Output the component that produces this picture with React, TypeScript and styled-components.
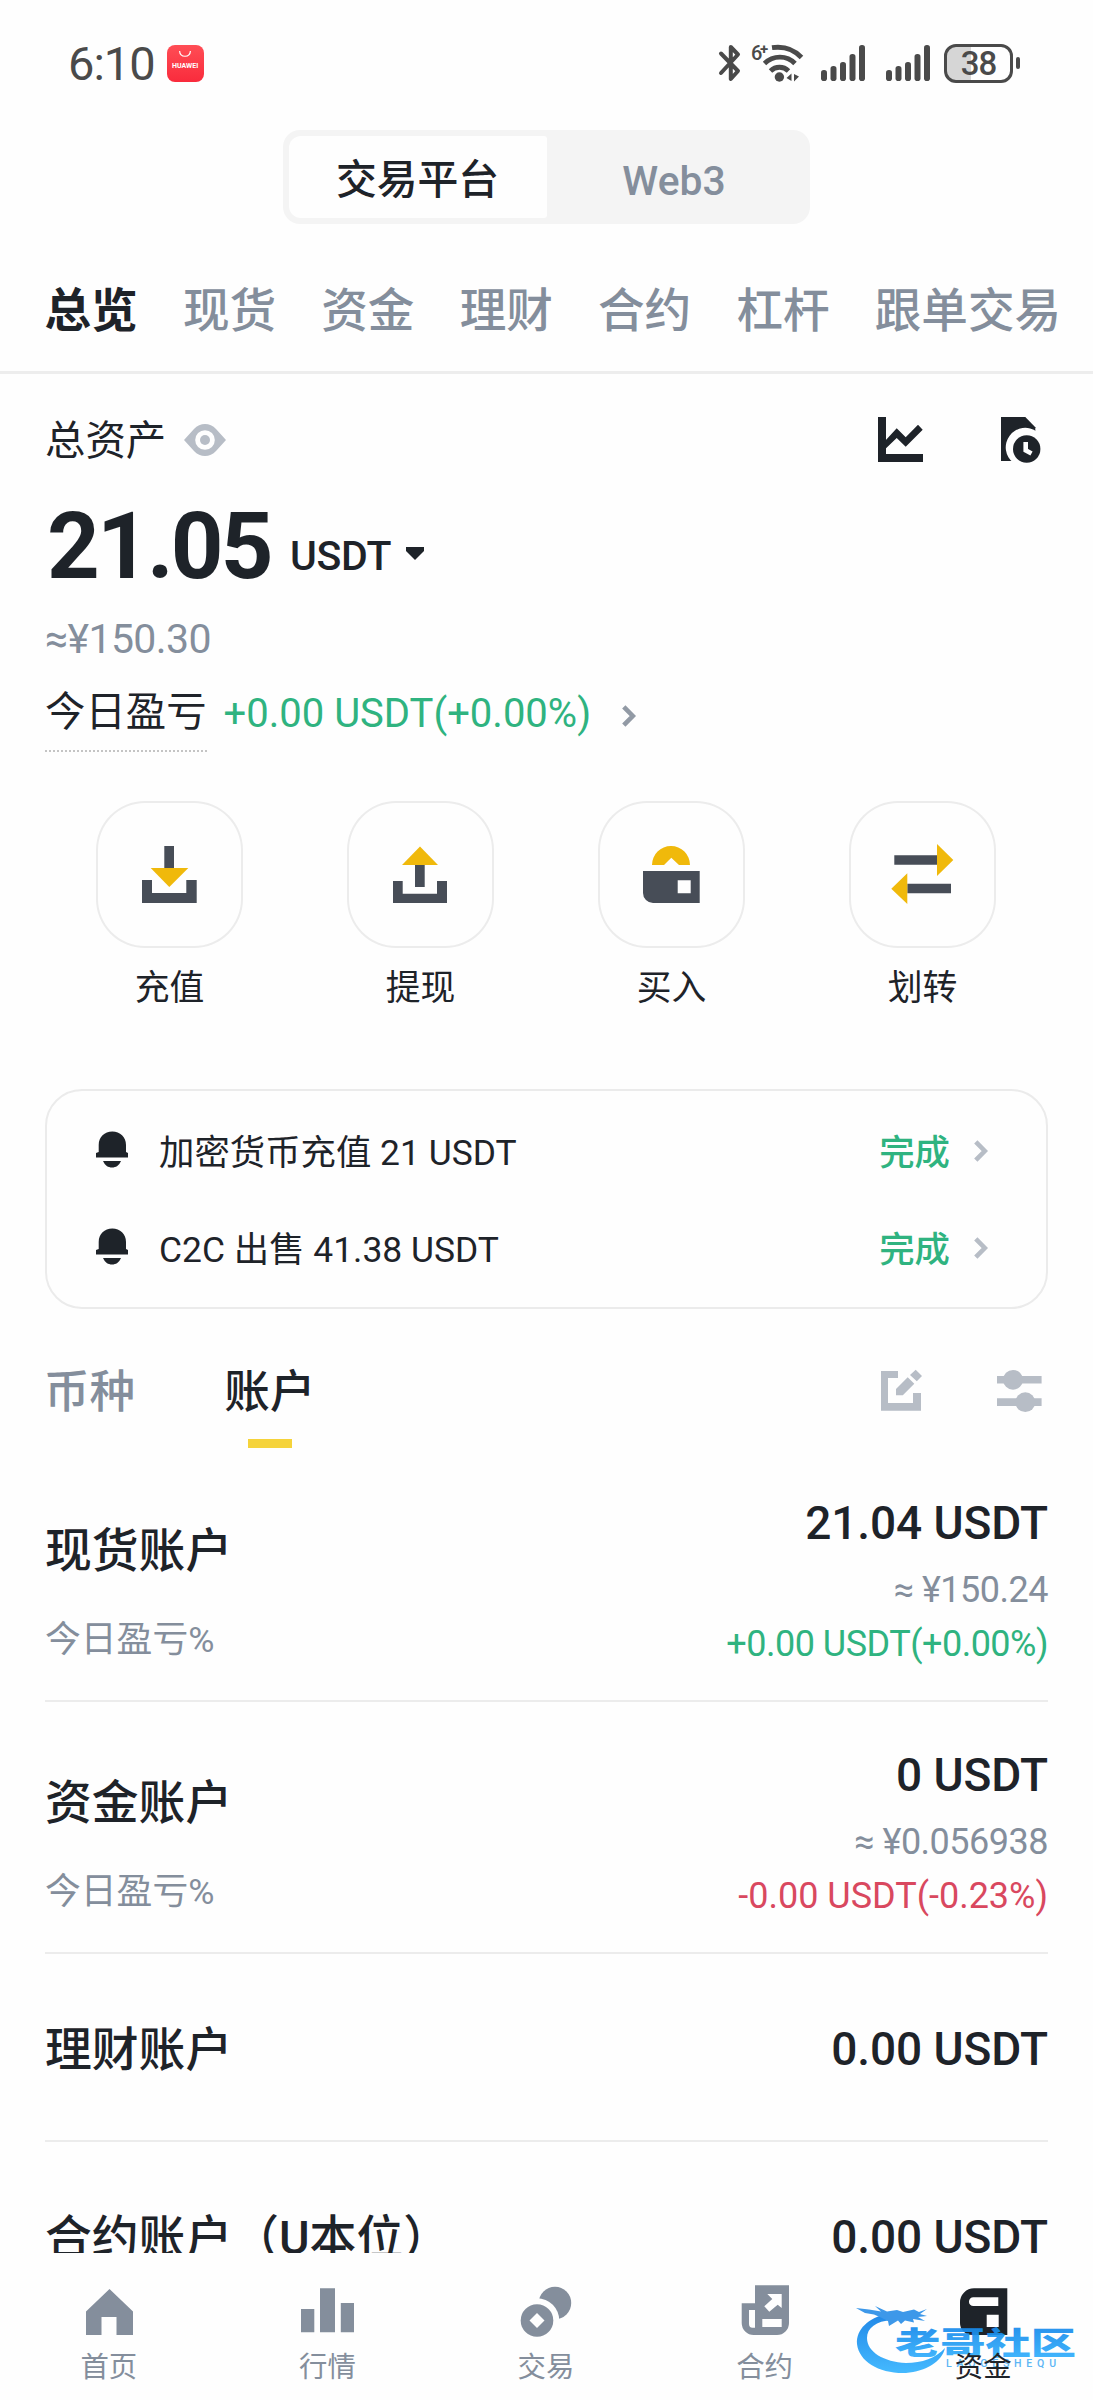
import React from "react";
import styled, { createGlobalStyle } from "styled-components";

const INK = "#1e2329";
const MUTED = "#848e9c";
const FAINT = "#b7bdc6";
const GREEN = "#2fb380";
const RED = "#d9485f";
const LINE = "#ececec";
const SLATE = "#474d57";
const GOLD = "#f0b90b";
const STATUS = "#4a4a4a";

const GlobalStyle = createGlobalStyle`
  * { box-sizing: border-box; }
  body {
    margin: 0;
    background: #fefefe;
    color: ${INK};
    font-family: Roboto, "Noto Sans CJK SC", sans-serif;
  }
  svg { display: block; flex: none; overflow: visible; }
`;

const Screen = styled.div`
  position: relative;
  display: flex;
  flex-direction: column;
  width: 1093px;
  height: 2400px;
  overflow: hidden;
`;

const Content = styled.main`
  flex: 1;
  min-height: 0;
  overflow: hidden;
`;

/* ---------- status bar ---------- */

const StatusBar = styled.header`
  display: flex;
  align-items: center;
  height: 130px;
  padding: 0 73px 4px 68px;
  color: ${STATUS};
`;

const Clock = styled.span`
  padding-top: 2px;
  font-size: 47px;
  line-height: 60px;
  letter-spacing: -1px;
`;

const StoreBadge = styled.div`
  display: flex;
  flex-direction: column;
  align-items: center;
  width: 37px;
  height: 37px;
  margin-left: 12px;
  padding-top: 6px;
  border-radius: 8px;
  background: linear-gradient(#ff4d55, #f92b3c);
  color: #fff;
  font-size: 7px;
  font-weight: 700;
  line-height: 8px;
`;

const BadgeName = styled.span`
  margin-top: 5px;
`;

const StatusIcons = styled.div`
  display: flex;
  align-items: center;
  margin-left: auto;
`;

const Spacer = styled.i<{ $w: number }>`
  width: ${(p) => p.$w}px;
`;

const Battery = styled.div`
  display: flex;
  align-items: center;
  justify-content: center;
  width: 69px;
  height: 39px;
  border: 3px solid ${STATUS};
  border-radius: 12px;
  background: linear-gradient(90deg, #d6d6d6 38%, transparent 38%);
  font-size: 33px;
  font-weight: 500;
  letter-spacing: -1px;
`;

const BatteryTip = styled.i`
  width: 4px;
  height: 12px;
  margin-left: 3px;
  border-radius: 2px;
  background: ${STATUS};
`;

/* ---------- platform switch and tabs ---------- */

const Switch = styled.div`
  display: flex;
  width: 527px;
  height: 94px;
  margin: 0 auto;
  padding: 6px;
  border-radius: 17px;
  background: #f4f4f4;
`;

const SwitchItem = styled.div<{ $active?: boolean }>`
  flex: ${(p) => (p.$active ? "0 0 258px" : "1")};
  padding-right: ${(p) => (p.$active ? 1 : 3)}px;
  border-radius: 12px 3px 3px 12px;
  background: ${(p) => (p.$active ? "#fefefe" : "transparent")};
  color: ${(p) => (p.$active ? INK : MUTED)};
  font-size: 40.8px;
  font-weight: 500;
  line-height: ${(p) => (p.$active ? 89 : 90)}px;
  height: 82px;
  text-align: center;
`;

const Tabs = styled.nav`
  display: flex;
  gap: 45.2px;
  height: 150px;
  padding: 57px 0 0 44.5px;
  border-bottom: 3px solid #ededed;
  font-size: 46.6px;
  line-height: 60px;
  white-space: nowrap;
`;

const Tab = styled.span<{ $active?: boolean }>`
  color: ${(p) => (p.$active ? INK : MUTED)};
  font-weight: ${(p) => (p.$active ? 700 : 500)};
`;

/* ---------- total assets ---------- */

const Section = styled.section`
  padding: 38px 45px 0;
`;

const TitleRow = styled.div`
  display: flex;
  align-items: center;
  height: 60px;
`;

const Title = styled.span`
  font-size: 40.4px;
  line-height: 60px;
`;

const TitleTools = styled.div`
  display: flex;
  gap: 78px;
  margin-left: auto;
  margin-right: 7px;
  padding-bottom: 5px;
`;

const TotalRow = styled.div`
  display: flex;
  align-items: flex-start;
  height: 100px;
  margin-top: 24px;
`;

const Total = styled.span`
  width: 245px;
  padding-left: 2px;
  font-size: 92px;
  font-weight: 700;
  line-height: 101px;
  letter-spacing: -2.8px;
`;

const Unit = styled.span`
  margin-right: 15px;
  font-size: 41px;
  font-weight: 500;
  line-height: 120px;
  letter-spacing: -0.3px;
`;

const Caret = styled.svg`
  margin-top: 51px;
`;

const Approx = styled.div`
  height: 50px;
  margin-top: 18px;
  color: ${MUTED};
  font-size: 41px;
  line-height: 50px;
  letter-spacing: -0.6px;
`;

const PnlRow = styled.div`
  display: flex;
  align-items: flex-start;
  height: 66px;
  margin-top: 22px;
  font-size: 40.4px;
  line-height: 54px;
`;

const PnlLabel = styled.span`
  height: 66px;
  border-bottom: 2px dotted #c4c4c4;
`;

const PnlValue = styled.span`
  margin: 0 31px 0 17px;
  padding-top: 1px;
  color: ${GREEN};
  font-size: 40px;
`;

const PnlArrow = styled.span`
  padding-top: 19px;
`;

/* ---------- actions ---------- */

const Actions = styled.div`
  display: flex;
  gap: 104px;
  margin-top: 49px;
  padding-left: 51px;
`;

const Action = styled.div`
  width: 147px;
  font-size: 34.8px;
  line-height: 50px;
  text-align: center;
`;

const ActionBox = styled.div`
  width: 147px;
  height: 147px;
  margin-bottom: 15px;
  border-radius: 49px;
  box-shadow: inset 0 0 0 2px ${LINE};
`;

/* ---------- notices ---------- */

const Card = styled.div`
  height: 220px;
  margin-top: 76px;
  padding: 11px 58px 0 49px;
  border: 2px solid #ebebeb;
  border-radius: 37px;
`;

const Notice = styled.div`
  display: flex;
  align-items: center;
  height: 97px;
  font-size: 35.4px;
  line-height: 50px;
`;

const NoticeText = styled.span`
  flex: 1;
  padding: 4px 0 0 31px;
`;

const NoticeState = styled.span`
  padding: 4px 24px 0 0;
  color: ${GREEN};
  font-weight: 500;
`;

/* ---------- accounts ---------- */

const ListTabs = styled.div`
  display: flex;
  gap: 89px;
  height: 86px;
  margin-top: 53px;
  margin-left: -1px;
`;

const ListTab = styled.div<{ $active?: boolean }>`
  display: flex;
  flex-direction: column;
  align-items: center;
  color: ${(p) => (p.$active ? INK : MUTED)};
  font-size: 45.6px;
  font-weight: 500;
  line-height: 61px;
  &::after {
    content: "";
    width: 44px;
    height: 9px;
    margin: 16px 0 0 1px;
    background: ${(p) => (p.$active ? "#f5d33b" : "transparent")};
  }
`;

const ListTools = styled.div`
  display: flex;
  gap: 75px;
  margin-left: auto;
  margin-right: 6px;
  padding-top: 8px;
`;

const Accounts = styled.div`
  padding-top: 2px;
`;

const AccountItem = styled.div<{ $brief?: boolean }>`
  display: flex;
  justify-content: space-between;
  align-items: ${(p) => (p.$brief ? "center" : "flex-start")};
  height: ${(p) => (p.$brief ? 188 : 252)}px;
  padding-top: ${(p) => (p.$brief ? 3 : 48)}px;
  border-bottom: 2px solid ${LINE};
`;

const AccountLeft = styled.div<{ $brief?: boolean }>`
  padding-top: ${(p) => (p.$brief ? 3 : 28)}px;
`;

const AccountName = styled.div`
  font-size: 46.8px;
  font-weight: 500;
  line-height: 50px;
`;

const AccountNote = styled.div`
  margin-top: 41px;
  color: ${MUTED};
  font-size: 35.8px;
  line-height: 46px;
`;

const AccountRight = styled.div`
  text-align: right;
`;

const Amount = styled.div`
  font-size: 46px;
  font-weight: 500;
  line-height: 50px;
  letter-spacing: -0.1px;
`;

const Sub = styled.div<{ $color: string; $gap: number }>`
  margin-top: ${(p) => p.$gap}px;
  color: ${(p) => p.$color};
  font-size: 36px;
  line-height: 46px;
  letter-spacing: ${(p) => (p.$color === RED ? 0 : -0.5)}px;
`;

/* ---------- bottom navigation ---------- */

const BottomNav = styled.nav`
  display: grid;
  grid-template-columns: repeat(5, 1fr);
  height: 147px;
  padding-top: 31px;
  background: #fefefe;
`;

const NavItem = styled.div`
  display: flex;
  flex-direction: column;
  align-items: center;
`;

const NavIcon = styled.div`
  display: flex;
  height: 54px;
`;

const NavLabel = styled.span<{ $active?: boolean }>`
  position: relative;
  z-index: 2;
  margin-top: 12px;
  margin-right: 1px;
  color: ${(p) => (p.$active ? INK : MUTED)};
  font-size: 28.4px;
  line-height: 36px;
`;

const Watermark = styled.svg`
  position: absolute;
  left: 852px;
  top: 2300px;
  z-index: 1;
  opacity: 0.92;
`;

/* ---------- icons ---------- */

const Bluetooth = () => (
  <svg width="24" height="40" fill="none" stroke={STATUS} strokeWidth="4" strokeLinecap="round" strokeLinejoin="round">
    <path d="M4 10.5L21 28L13.8 36V4L21 11.5L4 30" />
  </svg>
);

const WifiBox = styled.div`
  position: relative;
  width: 54px;
  height: 40px;
`;

const WifiGen = styled.span`
  position: absolute;
  left: 1px;
  top: 0;
  font-size: 20px;
  font-weight: 500;
  line-height: 20px;
  letter-spacing: -1px;
`;

const WifiPlus = styled.sup`
  position: absolute;
  left: 10px;
  top: -2px;
  font-size: 15px;
  font-weight: 700;
  line-height: 16px;
`;

const Wifi = () => (
  <WifiBox>
    <svg width="54" height="40" fill="none" stroke={STATUS} strokeWidth="4.8">
      <path d="M22 4.7C34 3 44 6.500 51.5 14.5" />
      <path d="M14.500 20.500C23 12 37 12 45 20.500" />
      <path d="M20.500 28C25.500 23 33.500 23 38.500 28" />
      <circle cx="29.400" cy="34" r="4.700" fill={STATUS} stroke="none" />
      <path d="M36.500 35L41.500 30.500V38ZM44 31V38.500L49 33.500Z" fill={STATUS} stroke="none" />
    </svg>
    <WifiGen>6</WifiGen>
    <WifiPlus>+</WifiPlus>
  </WifiBox>
);

const SIGNAL = [11, 15, 19, 27, 36];
const Signal = () => (
  <svg width="44" height="36" fill={STATUS}>
    {SIGNAL.map((h, i) => (
      <rect key={i} x={i * 9.5} y={36 - h} width="6" height={h} rx="2.800" />
    ))}
  </svg>
);

const EyeSvg = styled.svg`
  margin: 0 0 4px 17px;
`;

const Eye = () => (
  <EyeSvg width="44" height="34">
    <path d="M1 17L11 6C17 -.7 27 -.7 33 6L43 17L33 28C27 34.700 17 34.700 11 28Z" fill={FAINT} />
    <circle cx="22" cy="17" r="9.800" fill="#fefefe" />
    <circle cx="22" cy="17" r="5" fill={FAINT} />
  </EyeSvg>
);

const ChartIcon = () => (
  <svg width="45" height="45" fill={INK}>
    <path d="M0 0H8V37H45V45H0Z" />
    <path d="M7 24L18.700 11.300L27.700 20.300L40 7.700L44.700 12.700L27.700 29.700L18.700 21L7 32.300Z" />
  </svg>
);

const HistoryIcon = () => (
  <svg width="40" height="45">
    <path d="M0 0H24.300L34.300 10.300V44H0Z" fill={INK} />
    <path d="M36 14.800A18.300 18.300 0 0 0 12.500 46H36Z" fill="#fefefe" />
    <circle cx="25.700" cy="32" r="13.700" fill={INK} />
    <path d="M24.700 25V33.300L30.500 36.500" fill="none" stroke="#fefefe" strokeWidth="4.600" />
  </svg>
);

const Chevron = ({ color }: { color: string }) => (
  <svg width="14" height="22" fill="none" stroke={color} strokeWidth="4.600">
    <path d="M1.800 1.800L10.800 11L1.800 20.200" />
  </svg>
);

const BellSvg = styled.svg`
  margin-bottom: 2px;
`;

const Bell = () => (
  <BellSvg width="32" height="37" fill={INK}>
    <path d="M2.700 21V14C2.700 6 8.500 .5 16.300 .5S30 6 30 14V21L32 22V26.500H0V22Z" />
    <path d="M7 30H25C23 34.500 20 36.500 16 36.500S9 34.500 7 30Z" />
  </BellSvg>
);

const DepositIcon = () => (
  <svg width="147" height="147" fill={SLATE}>
    <path d="M68.300 45H78V67H68.300ZM46 79H56V92H90.300V79H100.700V102H46Z" />
    <path d="M54.700 67H92.300L73.300 86Z" fill={GOLD} />
  </svg>
);

const WithdrawIcon = () => (
  <svg width="147" height="147" fill={SLATE}>
    <path d="M68 63H77.700V86H68ZM46 80H55.700V92.700H90V80H100V102H46Z" />
    <path d="M55 64H91L73 45.500Z" fill={GOLD} />
  </svg>
);

const BuyIcon = () => (
  <svg width="147" height="147" fill={SLATE}>
    <path d="M54 64A19 19 0 0 1 92 64H81L73.300 56.700L66 64Z" fill={GOLD} />
    <path fillRule="evenodd" d="M45 70H101.700V102H55A10 10 0 0 1 45 92ZM79.700 79.300V92.300H92.700V79.300Z" />
  </svg>
);

const TransferIcon = () => (
  <svg width="147" height="147" fill={SLATE}>
    <path d="M45.300 54.300H88V63.700H45.300ZM58.300 82.700H102V92.300H58.300Z" />
    <path d="M88 43L104.300 59L88 75ZM58.300 72.300L42.300 87.700L58.300 103Z" fill={GOLD} />
  </svg>
);

const EditIcon = () => (
  <svg width="41" height="42" fill={FAINT}>
    <path d="M0 1H17V8H7V33H32V23H40V40.700H0Z" />
    <path d="M15 19L26.700 7.300L33.300 13.700L21.800 25.300H15ZM34.700 -.3L41 6L35.800 11.300L29 5Z" />
  </svg>
);

const SlidersIcon = () => (
  <svg width="45" height="44" fill={FAINT}>
    <path d="M0 6H44.600V13.500H0ZM0 28.300H44.600V36H0Z" />
    <circle cx="16" cy="9.800" r="9.900" />
    <circle cx="28.300" cy="32.200" r="9.900" />
  </svg>
);

const HomeIcon = () => (
  <svg width="47" height="50" fill={MUTED}>
    <path d="M23.500 5L47 27.500V51H30.500V33H15.500V51H0V27.500Z" />
  </svg>
);

const MarketIcon = () => (
  <svg width="53" height="50" fill={MUTED}>
    <path d="M0 25H13.300V48.300H0ZM19 4.300H34V48.300H19ZM39.800 19H53V48.300H39.800Z" />
  </svg>
);

const TradeIcon = () => (
  <svg width="52" height="52">
    <circle cx="35" cy="19" r="16.200" fill={MUTED} />
    <circle cx="17" cy="36.500" r="22.300" fill="#fefefe" />
    <circle cx="17" cy="36.500" r="16.300" fill={MUTED} />
    <path d="M17 29L24.500 36.500L17 44L9.500 36.500Z" fill="#fefefe" />
  </svg>
);

const FuturesIcon = () => (
  <svg width="49" height="52">
    <path
      d="M14 1.300H48V39A12 12 0 0 1 36 51H12.700A12 12 0 0 1 .7 39V19.300H14ZM8 26V40A3.500 3.700 0 0 0 11.500 43.700H14V26ZM21.300 35V43H40.700V35ZM26.300 10L31.300 15L23.300 22.300L28.300 27.700L36.700 20.700L40.700 24V10Z"
      fill={MUTED}
      fillRule="evenodd"
    />
  </svg>
);

const WalletIcon = () => (
  <svg width="49" height="52" fill={INK} fillRule="evenodd">
    <path d="M15 4.300H48.300V51H13A12 12 0 0 1 1 39V18.300A14 14 0 0 1 15 4.300ZM14.300 13.300A4.300 4.300 0 0 0 14.300 22H39.300V13.300ZM27.700 30.700V43H39.700V30.700Z" />
  </svg>
);

const CommunityMark = () => (
  <Watermark width="230" height="76">
    <defs>
      <linearGradient id="sky" x1="0" y1="0" x2="0" y2="1">
        <stop offset="0" stopColor="#0f7fe6" />
        <stop offset="1" stopColor="#35b4ff" />
      </linearGradient>
    </defs>
    <g fill="url(#sky)">
      <path d="M34 14C17 18 4 29 5 44C7 62 28 74 54 73C74 71 90 62 93 48C84 58 70 63 54 63C32 62 15 52 15 38C15 28 24 21 40 20Z" />
      <path d="M4 8L17 9.500L29 11.500L23 6L35 11.500L45 10L51 12L62 9.500L67 12L75 9L68 14L75 16L66 17L73 21L61 19L62 22.500L53 20.500L49 24L46 20.500L37 26L36 21L30 18L22 14.500L13 13Z" fill="#2d90e8" />
      <text
        x="43" y="53.500" fontFamily="Noto Sans CJK SC, sans-serif" fontSize="31" fontWeight="900"
        textLength="181" lengthAdjust="spacingAndGlyphs"
      >
        老哥社区
      </text>
      <text x="94" y="66.500" fontFamily="Roboto, sans-serif" fontSize="10.500" fontWeight="500" textLength="110" fill="#4fb0f5">
        LAOGESHEQU
      </text>
    </g>
  </Watermark>
);

/* ---------- data ---------- */

const TABS = ["总览", "现货", "资金", "理财", "合约", "杠杆", "跟单交易"];

const ACTIONS = [
  { label: "充值", Icon: DepositIcon },
  { label: "提现", Icon: WithdrawIcon },
  { label: "买入", Icon: BuyIcon },
  { label: "划转", Icon: TransferIcon },
];

const NOTICES = ["加密货币充值 21 USDT", "C2C 出售 41.38 USDT"];

const ACCOUNTS = [
  { name: "现货账户", amount: "21.04 USDT", fiat: "≈ ¥150.24", pnl: "+0.00 USDT(+0.00%)", color: GREEN },
  { name: "资金账户", amount: "0 USDT", fiat: "≈ ¥0.056938", pnl: "-0.00 USDT(-0.23%)", color: RED },
  { name: "理财账户", amount: "0.00 USDT" },
  { name: "合约账户（U本位）", amount: "0.00 USDT" },
];

const NAV = [
  { label: "首页", Icon: HomeIcon },
  { label: "行情", Icon: MarketIcon },
  { label: "交易", Icon: TradeIcon },
  { label: "合约", Icon: FuturesIcon },
  { label: "资金", Icon: WalletIcon, active: true },
];

export default function App() {
  return (
    <Screen>
      <GlobalStyle />
      <Content>
        <StatusBar>
          <Clock>6:10</Clock>
          <StoreBadge>
            <svg width="12" height="6" fill="none" stroke="#fff" strokeWidth="1.200">
              <path d="M.6 0C1 7 11 7 11.400 0" />
            </svg>
            <BadgeName>HUAWEI</BadgeName>
          </StoreBadge>
          <StatusIcons>
            <Bluetooth />
            <Spacer $w={9} />
            <Wifi />
            <Spacer $w={17} />
            <Signal />
            <Spacer $w={21} />
            <Signal />
            <Spacer $w={14} />
            <Battery>38</Battery>
            <BatteryTip />
          </StatusIcons>
        </StatusBar>

        <Switch>
          <SwitchItem $active>交易平台</SwitchItem>
          <SwitchItem>Web3</SwitchItem>
        </Switch>

        <Tabs>
          {TABS.map((t, i) => (
            <Tab key={t} $active={i === 0}>{t}</Tab>
          ))}
        </Tabs>

        <Section>
          <TitleRow>
            <Title>总资产</Title>
            <Eye />
            <TitleTools>
              <ChartIcon />
              <HistoryIcon />
            </TitleTools>
          </TitleRow>
          <TotalRow>
            <Total>21.05</Total>
            <Unit>USDT</Unit>
            <Caret width="18" height="13" fill={INK}>
              <path d="M0 0H18V4L9 13L0 4Z" />
            </Caret>
          </TotalRow>
          <Approx>≈¥150.30</Approx>
          <PnlRow>
            <PnlLabel>今日盈亏</PnlLabel>
            <PnlValue>+0.00 USDT(+0.00%)</PnlValue>
            <PnlArrow><Chevron color="#929aa5" /></PnlArrow>
          </PnlRow>

          <Actions>
            {ACTIONS.map(({ label, Icon }) => (
              <Action key={label}>
                <ActionBox><Icon /></ActionBox>
                {label}
              </Action>
            ))}
          </Actions>

          <Card>
            {NOTICES.map((text) => (
              <Notice key={text}>
                <Bell />
                <NoticeText>{text}</NoticeText>
                <NoticeState>完成</NoticeState>
                <Chevron color={FAINT} />
              </Notice>
            ))}
          </Card>

          <ListTabs>
            <ListTab>币种</ListTab>
            <ListTab $active>账户</ListTab>
            <ListTools>
              <EditIcon />
              <SlidersIcon />
            </ListTools>
          </ListTabs>

          <Accounts>
            {ACCOUNTS.map((a) => (
              <AccountItem key={a.name} $brief={!a.pnl}>
                <AccountLeft $brief={!a.pnl}>
                  <AccountName>{a.name}</AccountName>
                  {a.pnl && <AccountNote>今日盈亏%</AccountNote>}
                </AccountLeft>
                <AccountRight>
                  <Amount>{a.amount}</Amount>
                  {a.fiat && <Sub $color={MUTED} $gap={19}>{a.fiat}</Sub>}
                  {a.pnl && <Sub $color={a.color as string} $gap={8}>{a.pnl}</Sub>}
                </AccountRight>
              </AccountItem>
            ))}
          </Accounts>
        </Section>
      </Content>

      <BottomNav>
        {NAV.map(({ label, Icon, active }) => (
          <NavItem key={label}>
            <NavIcon><Icon /></NavIcon>
            <NavLabel $active={active}>{label}</NavLabel>
          </NavItem>
        ))}
      </BottomNav>
      <CommunityMark />
    </Screen>
  );
}
